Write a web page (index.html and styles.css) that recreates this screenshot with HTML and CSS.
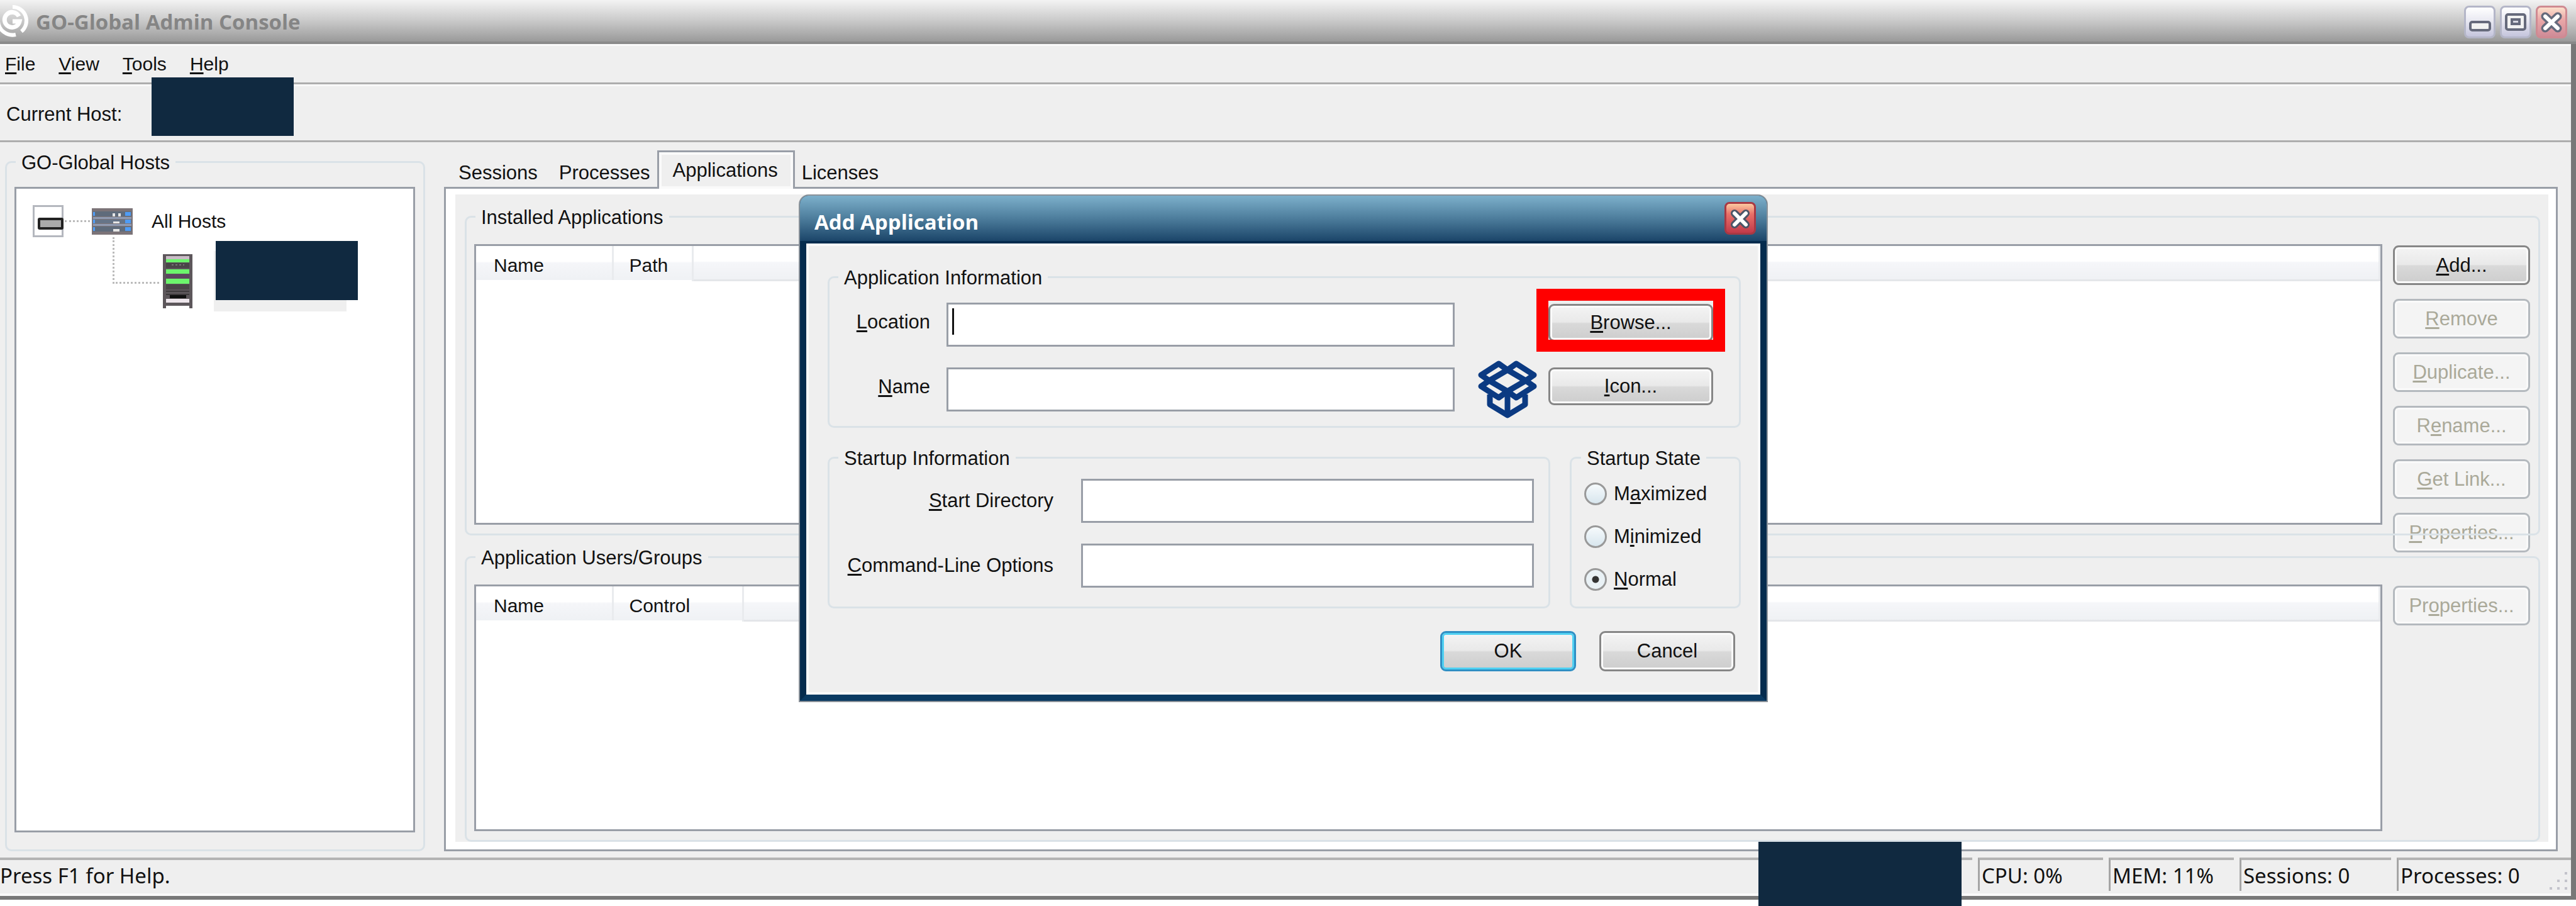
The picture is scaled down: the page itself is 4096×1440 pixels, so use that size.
FILE: index.html
```html
<!DOCTYPE html>
<html lang="en">
  <head>
    <meta charset="UTF-8" />
    <meta name="viewport" content="width=device-width, initial-scale=1.0" />
    <title>GO-Global Admin Console</title>
    <link rel="stylesheet" href="styles.css" />
  </head>
  <body>
    <div class="window">
      <header class="titlebar">
        <svg class="logo" viewBox="0 0 48 52">
          <g fill="none" stroke="#fff" stroke-width="6">
            <path d="M20 4 A22 22 0 0 1 34 43" />
            <path d="M-3 27 A23 23 0 0 0 25 48" />
            <path d="M30 19 A12 12 0 1 0 31 27 H20" stroke-width="7" />
          </g>
        </svg>
        <h1>GO-Global Admin Console</h1>
        <div class="window-btns">
          <button type="button" class="winbtn" aria-label="Minimize">
            <svg viewBox="0 0 50 52"><rect x="10" y="26" width="31" height="13" rx="3" fill="#f2f2f2" stroke="#666a7c" stroke-width="4" /></svg>
          </button>
          <button type="button" class="winbtn" aria-label="Maximize">
            <svg viewBox="0 0 50 52">
              <rect x="10" y="14" width="30" height="24" rx="3" fill="#f2f2f2" stroke="#666a7c" stroke-width="4" />
              <rect x="19" y="22" width="12" height="7" fill="#d8d8e2" stroke="#666a7c" stroke-width="4" />
            </svg>
          </button>
          <button type="button" class="winbtn winbtn-close" aria-label="Close">
            <svg viewBox="0 0 50 52">
              <path d="M15 17 L35 36 M35 17 L15 36" stroke="#666a7c" stroke-width="13" stroke-linecap="round" />
              <path d="M15 17 L35 36 M35 17 L15 36" stroke="#fff" stroke-width="6" stroke-linecap="round" />
            </svg>
          </button>
        </div>
      </header>

      <div class="client">
        <nav class="menubar">
          <a href="#"><u>F</u>ile</a>
          <a href="#"><u>V</u>iew</a>
          <a href="#"><u>T</u>ools</a>
          <a href="#"><u>H</u>elp</a>
        </nav>

        <div class="hostbar">
          <span>Current Host:</span>
          <span class="mask mask-host"></span>
        </div>

        <main class="main">
          <fieldset class="group hosts">
            <legend>GO-Global Hosts</legend>
            <div class="box tree">
              <div class="tree-row">
                <button type="button" class="expander" aria-label="Collapse"></button>
                <span class="dots"></span>
                <svg class="server" viewBox="0 0 65 42">
                  <rect width="65" height="42" fill="#7c7478" />
                  <path d="M2 5h61v8H2zM2 29h61v8H2z" fill="#5f6b7b" />
                  <path d="M2 14h61v3H2zM2 25h61v3H2z" fill="#8f9bb3" />
                  <path d="M2 18h61v6H2z" fill="#667488" />
                  <path d="M2 6h3v6H2zM2 18h3v6H2zM2 30h3v6H2zM53 6h9v6h-9zM53 18h9v6h-9zM53 30h9v6h-9z" fill="#4f9cf5" />
                  <path d="M33 8h4v5h-4zM42 8h4v5h-4zM34 21h10v3H34zM34 33h10v4H34z" fill="#e6e6e6" />
                </svg>
                <span>All Hosts</span>
              </div>
              <div class="tree-child">
                <span class="branch"></span>
                <svg class="rack" viewBox="0 0 47 86">
                  <path d="M0 0h47v86h-5v-4H5v4H0z" fill="#5d575b" />
                  <path d="M5 3h37v5H5z" fill="#c9bcc6" />
                  <path d="M5 8h37v5H5zM5 24h37v7H5zM5 39h37v8H5z" fill="#6cf56c" />
                  <path d="M5 14h37v8H5zM5 48h37v8H5z" fill="#4a4548" />
                  <path d="M5 32h37v6H5z" fill="#5d4560" />
                  <path d="M14 17h20" stroke="#777" stroke-width="2" stroke-dasharray="3 3" />
                  <path d="M5 59h37M5 64h37" stroke="#3e3a3c" stroke-width="2" />
                  <path d="M11 65h26v5H11z" fill="#111" />
                  <path d="M5 71h37v6H5z" fill="#eee6ec" />
                </svg>
                <span class="selected-host"><span class="mask mask-node"></span></span>
              </div>
            </div>
          </fieldset>

          <section class="workspace">
            <div class="tabs" role="tablist">
              <button type="button" role="tab">Sessions</button>
              <button type="button" role="tab">Processes</button>
              <button type="button" role="tab" class="active" aria-selected="true">Applications</button>
              <button type="button" role="tab">Licenses</button>
            </div>
            <div class="panel">
              <div class="panel-inner">
                <fieldset class="group installed">
                  <legend>Installed Applications</legend>
                  <div class="box">
                    <table class="list">
                      <thead>
                        <tr>
                          <th class="col-name">Name</th>
                          <th class="col-path">Path</th>
                          <th></th>
                        </tr>
                      </thead>
                    </table>
                  </div>
                  <div class="actions">
                    <button type="button" class="btn"><u>A</u>dd...</button>
                    <button type="button" class="btn" disabled><u>R</u>emove</button>
                    <button type="button" class="btn" disabled><u>D</u>uplicate...</button>
                    <button type="button" class="btn" disabled>R<u>e</u>name...</button>
                    <button type="button" class="btn" disabled><u>G</u>et Link...</button>
                    <button type="button" class="btn" disabled><u>P</u>roperties...</button>
                  </div>
                </fieldset>
                <fieldset class="group users">
                  <legend>Application Users/Groups</legend>
                  <div class="box">
                    <table class="list">
                      <thead>
                        <tr>
                          <th class="col-name">Name</th>
                          <th class="col-control">Control</th>
                          <th></th>
                        </tr>
                      </thead>
                    </table>
                  </div>
                  <div class="actions">
                    <button type="button" class="btn" disabled>Pr<u>o</u>perties...</button>
                  </div>
                </fieldset>
              </div>
            </div>
          </section>
        </main>

        <footer class="statusbar">
          <span class="cell cell-help">Press F1 for Help.</span>
          <span class="cell">CPU: 0%</span>
          <span class="cell">MEM: 11%</span>
          <span class="cell cell-sessions">Sessions: 0</span>
          <span class="cell cell-processes">Processes: 0</span>
          <span class="mask mask-status"></span>
          <svg class="grip" viewBox="0 0 32 32">
            <path d="M26 2h4v4h-4zM14 14h4v4h-4zM26 14h4v4h-4zM2 26h4v4H2zM14 26h4v4h-4zM26 26h4v4h-4z" fill="#c3c3cb" />
          </svg>
        </footer>
      </div>

      <form class="dialog">
        <div class="dialog-title">
          <h2>Add Application</h2>
          <button type="button" class="winbtn dialog-close" aria-label="Close">
            <svg viewBox="0 0 50 52">
              <path d="M16 18 L34 36 M34 18 L16 36" stroke="#4b5567" stroke-width="12" stroke-linecap="round" />
              <path d="M16 18 L34 36 M34 18 L16 36" stroke="#fff" stroke-width="6" stroke-linecap="round" />
            </svg>
          </button>
        </div>
        <div class="dialog-body">
          <fieldset class="group info">
            <legend>Application Information</legend>
            <label for="location"><u>L</u>ocation</label>
            <div class="field">
              <input type="text" id="location" name="location" />
              <span class="caret"></span>
            </div>
            <div class="browse">
              <button type="button" class="btn"><u>B</u>rowse...</button>
              <span class="highlight"></span>
            </div>
            <label for="name"><u>N</u>ame</label>
            <div class="field">
              <input type="text" id="name" name="name" />
            </div>
            <svg class="app-icon" viewBox="0 0 94 92">
              <g fill="none" stroke="#0b3a82" stroke-width="9" stroke-linejoin="round">
                <path d="M33 5 L47 15 L18 32 L5 23 Z" />
                <path d="M61 5 L47 15 L76 32 L89 23 Z" />
                <path d="M18 32 L5 41 L33 59 L47 49 Z" />
                <path d="M76 32 L89 41 L61 59 L47 49 Z" />
                <path d="M19 54 V70 L47 87 L75 70 V54" />
                <path d="M47 50 V87" />
              </g>
            </svg>
            <button type="button" class="btn"><u>I</u>con...</button>
          </fieldset>

          <div class="startup">
            <fieldset class="group startup-info">
              <legend>Startup Information</legend>
              <label for="startdir"><u>S</u>tart Directory</label>
              <input type="text" id="startdir" name="startdir" />
              <label for="options"><u>C</u>ommand-Line Options</label>
              <input type="text" id="options" name="options" />
            </fieldset>
            <fieldset class="group startup-state">
              <legend>Startup State</legend>
              <label><input type="radio" name="state" /><span>M<u>a</u>ximized</span></label>
              <label><input type="radio" name="state" /><span>M<u>i</u>nimized</span></label>
              <label><input type="radio" name="state" checked /><span><u>N</u>ormal</span></label>
            </fieldset>
          </div>

          <div class="dialog-btns">
            <button type="button" class="btn btn-default">OK</button>
            <button type="button" class="btn">Cancel</button>
          </div>
        </div>
      </form>
    </div>
  </body>
</html>
```
FILE: styles.css
```css
* {
  box-sizing: border-box;
}

body {
  margin: 0;
  background: #fff;
  color: #111;
  font-family: "Liberation Sans", Arial, sans-serif;
  font-size: 31px;
  line-height: 36px;
}

button,
input {
  font: inherit;
  color: inherit;
  margin: 0;
}

u {
  text-decoration-thickness: 3px;
  text-underline-offset: 3px;
}

.window {
  position: relative;
  display: flex;
  flex-direction: column;
  min-height: 100vh;
  padding-bottom: 10px;
}

/* title bar */
.titlebar {
  display: flex;
  align-items: center;
  height: 70px;
  padding-right: 14px;
  border-bottom: 4px solid #8a8a8a;
  background: linear-gradient(#f3f3f3, #c9c9c9 50%, #9a9a9a);
}

.titlebar h1 {
  flex: 1;
  margin: 4px 0 0 9px;
  font: bold 33px/40px "Open Sans", sans-serif;
  color: #858585;
}

.logo {
  width: 48px;
  height: 52px;
}

.window-btns {
  display: flex;
  gap: 7px;
  padding-top: 4px;
}

.winbtn {
  width: 50px;
  height: 52px;
  padding: 0;
  border: 3px solid #b4b6c8;
  border-radius: 8px;
  background: linear-gradient(#fff, #e6e6f0 50%, #c4c4dc);
}

.winbtn svg {
  display: block;
  width: 50px;
  height: 52px;
  margin: -3px;
}

.winbtn-close {
  border-color: #cf8a92;
  background: linear-gradient(#fbe0cc, #eba9a9 40%, #cf8b97);
}

/* client area */
.client {
  flex: 1;
  display: flex;
  flex-direction: column;
  border-right: 8px solid #787878;
  border-bottom: 6px solid #787878;
  background: #efefef;
}

.menubar {
  display: flex;
  align-items: center;
  gap: 37px;
  height: 64px;
  padding-left: 8px;
  border-top: 3px solid #fafafa;
  border-bottom: 3px solid #adadad;
  font-size: 30px;
}

.menubar a {
  color: inherit;
  text-decoration: none;
}

.hostbar {
  position: relative;
  display: flex;
  align-items: center;
  height: 92px;
  padding: 4px 0 0 10px;
  border-top: 3px solid #f9f9f9;
  border-bottom: 3px solid #adadad;
}

.mask {
  position: absolute;
  background: #102940;
}

.mask-host {
  left: 241px;
  top: -14px;
  width: 226px;
  height: 93px;
}

.main {
  flex: 1;
  display: flex;
  gap: 30px;
  padding: 13px 21px 10px 8px;
}

.group {
  min-width: 0;
  margin: 0;
  padding: 0;
  border: 3px solid #dae2e7;
  border-radius: 10px;
}

.group legend {
  height: 36px;
  margin-left: 14px;
  padding: 0 9px;
  line-height: 40px;
}

.box {
  flex: 1;
  border: 3px solid #999ea7;
  background: #fff;
}

/* host tree */
.hosts {
  display: flex;
  width: 668px;
  padding: 22px 13px 27px 12px;
}

.hosts legend,
.installed legend,
.users legend {
  margin-left: 2px;
}

.tree {
  padding: 26px 0 0 26px;
}

.tree-row {
  display: flex;
  align-items: center;
  font-size: 30px;
}

.expander {
  position: relative;
  width: 49px;
  height: 51px;
  padding: 0;
  border: 3px solid #b4b7be;
  background: #fff;
}

.expander::after {
  content: "";
  position: absolute;
  left: 5px;
  top: 17px;
  width: 33px;
  height: 11px;
  border: 4px solid #222;
  border-radius: 3px;
  background: #aaa;
}

.dots {
  width: 40px;
  margin: 0 3px 0 2px;
  border-top: 3px dotted #bbb;
}

.server {
  width: 65px;
  height: 42px;
  margin-right: 30px;
}

.tree-child {
  display: flex;
  padding-left: 127px;
}

.branch {
  width: 74px;
  height: 74px;
  margin-right: 6px;
  border-left: 3px dotted #bbb;
  border-bottom: 3px dotted #bbb;
}

.rack {
  width: 47px;
  height: 86px;
  margin: 27px 34px 0 0;
}

.selected-host {
  position: relative;
  width: 211px;
  height: 96px;
  margin-top: 22px;
  background: #efefef;
}

.mask-node {
  left: 3px;
  top: -16px;
  width: 226px;
  height: 94px;
}

/* tabs */
.workspace {
  flex: 1;
  display: flex;
  flex-direction: column;
  min-width: 0;
}

.tabs {
  display: flex;
  align-items: flex-end;
  height: 58px;
  padding-left: 6px;
}

.tabs button {
  height: 44px;
  padding: 0 17px;
  border: 0;
  background: none;
}

.tabs .active {
  position: relative;
  height: 61px;
  margin: 0 -6px -3px;
  padding: 0 24px 0 22px;
  border: 3px solid #999ea7;
  border-bottom: 0;
  background: #efefef;
  box-shadow: inset 0 0 0 4px #fafafa;
}

.panel {
  flex: 1;
  display: flex;
  padding: 9px 12px 12px 15px;
  border: 3px solid #999ea7;
  background: #fff;
}

.panel-inner {
  flex: 1;
  display: flex;
  flex-direction: column;
  gap: 16px;
  padding: 17px 13px 0 15px;
  background: #efefef;
}

.installed,
.users {
  position: relative;
  display: flex;
  gap: 17px;
  min-height: 0;
  padding: 26px 13px 14px 12px;
}

.installed {
  flex: 526 1 0;
}

.users {
  flex: 466 1 0;
}

/* the frame runs over the last button */
.installed::after {
  content: "";
  position: absolute;
  left: 10px;
  right: 10px;
  bottom: -3px;
  border-bottom: 3px solid #dae2e7;
}

.actions {
  display: flex;
  flex-direction: column;
  gap: 22px;
  width: 218px;
  padding-top: 2px;
}

.list {
  width: 100%;
  table-layout: fixed;
  border-collapse: collapse;
}

.list th {
  height: 54px;
  padding: 8px 0 0 28px;
  border-right: 3px solid #e9ebee;
  background: linear-gradient(#fff 45%, #f5f6f9 50%, #eff1f4);
  font-size: 30px;
  font-weight: normal;
  text-align: left;
}

.list th:last-child {
  border-bottom: 3px solid #e4e6e9;
}

.col-name {
  width: 217px;
}

.list .col-path,
.list .col-control {
  padding-left: 25px;
}

.col-path {
  width: 127px;
}

.col-control {
  width: 207px;
}

/* buttons */
.btn {
  flex: none;
  height: 63px;
  padding: 0;
  border: 3px solid #868686;
  border-radius: 9px;
  background: linear-gradient(#f4f4f4, #e9e9e9 48%, #d9d9d9 52%, #cdcdcd);
  box-shadow: inset 0 0 0 3px #fafafa;
}

.btn:disabled {
  border-color: #b4b9be;
  background: #f4f4f4;
  color: #aaa999;
}

/* status bar */
.statusbar {
  position: relative;
  display: flex;
  gap: 9px;
  height: 61px;
  padding-bottom: 4px;
  border-bottom: 4px solid #fafafa;
  font: 33px/50px "Noto Sans", sans-serif;
}

.cell {
  width: 199px;
  padding-left: 3px;
  border-top: 4px solid #b3b3b3;
  border-left: 3px solid #a5a5a5;
}

.cell-help {
  flex: 1;
  padding-left: 0;
  border-left: 0;
}

.cell-sessions {
  width: 241px;
}

.cell-processes {
  width: 277px;
}

.mask-status {
  left: 2796px;
  top: -25px;
  width: 323px;
  height: 102px;
}

.grip {
  position: absolute;
  right: 4px;
  bottom: 4px;
  width: 32px;
  height: 32px;
}

/* add application dialog */
.dialog {
  position: absolute;
  left: 1272px;
  top: 311px;
  width: 1537px;
  border: 10px solid #052c4e;
  border-top: 0;
  border-bottom-color: #0a3a62;
  border-radius: 14px 14px 0 0;
  background: #efefef;
  box-shadow: 0 0 0 2px #8b9299;
}

.dialog-title {
  display: flex;
  align-items: center;
  justify-content: space-between;
  height: 76px;
  margin: 0 -10px;
  padding: 0 17px 0 23px;
  border-bottom: 4px solid #052c4e;
  border-radius: 14px 14px 0 0;
  background: linear-gradient(#7db0cb, #4d7d9c 50%, #1b4569);
}

.dialog-title h2 {
  margin: 12px 0 0;
  font: bold 33px/40px "Open Sans", sans-serif;
  color: #fff;
}

.dialog-close {
  border-color: #a93843;
  background: linear-gradient(#fbc9a0, #ea7068 35%, #c23a4a);
}

.dialog-body {
  padding: 31px 27px 33px 30px;
  border: 4px solid #fafafa;
}

.info {
  display: grid;
  grid-template-columns: 168px 1fr 113px 262px;
  grid-template-rows: 70px 70px;
  gap: 33px 18px;
  padding: 23px 41px 23px 0;
}

.info label {
  padding-right: 8px;
  line-height: 62px;
  text-align: right;
}

.info .btn {
  width: 100%;
  height: 60px;
}

.field {
  position: relative;
}

.dialog input[type="text"] {
  display: block;
  width: 100%;
  height: 70px;
  padding: 0 8px;
  border: 3px solid #999ea7;
  border-radius: 0;
  background: #fff;
}

.caret {
  position: absolute;
  left: 9px;
  top: 9px;
  width: 3px;
  height: 42px;
  background: #111;
}

.browse {
  position: relative;
  grid-column: 4;
  padding-top: 2px;
}

.highlight {
  position: absolute;
  left: -19px;
  right: -19px;
  top: -22px;
  height: 100px;
  border: 19px solid #f00;
}

.app-icon {
  justify-self: end;
  align-self: center;
  width: 94px;
  height: 92px;
}

.startup {
  display: flex;
  gap: 31px;
  margin-top: 29px;
}

.startup-info {
  flex: 1;
  display: grid;
  grid-template-columns: 356px 1fr;
  gap: 33px 44px;
  padding: 16px 23px 30px 0;
}

.startup-info label {
  line-height: 70px;
  text-align: right;
}

.startup-state {
  width: 272px;
  padding: 6px 0 0 20px;
}

.startup-state legend {
  margin-left: -5px;
}

.startup-state label {
  display: flex;
  align-items: center;
  gap: 11px;
  height: 68px;
}

.startup-state input {
  appearance: none;
  width: 36px;
  height: 36px;
  border: 3px solid #999;
  border-radius: 50%;
  background: linear-gradient(#f6fafc, #d8e6ee);
}

.startup-state input:checked {
  background: radial-gradient(circle, #333 5px, #e9f1f5 6px);
}

.dialog-btns {
  display: flex;
  justify-content: flex-end;
  gap: 37px;
  margin-top: 36px;
  padding-right: 9px;
}

.dialog-btns .btn {
  width: 216px;
  height: 64px;
}

.dialog-btns .btn-default {
  border-color: #2f8fc4;
  box-shadow: inset 0 0 0 3px #4fd0f2;
}
```
